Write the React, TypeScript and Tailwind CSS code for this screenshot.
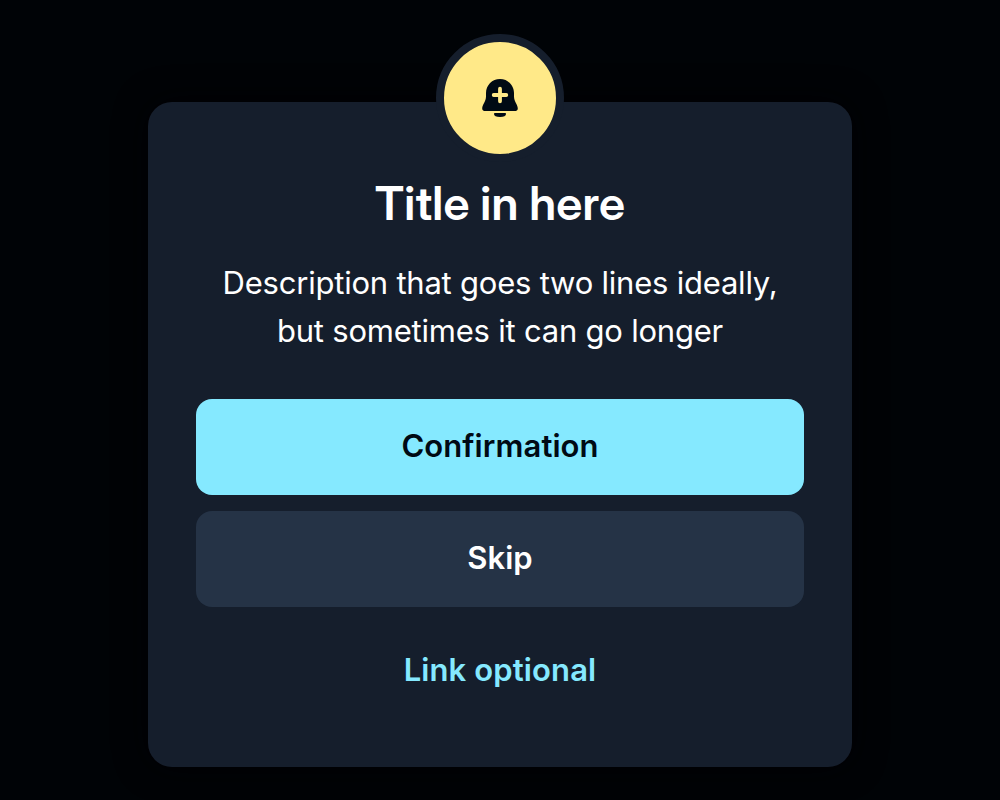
function BellPlusIcon() {
  return (
    <svg width="48" height="48" viewBox="0 0 48 48" fill="none" aria-hidden="true">
      <path
        d="M24 5C16.2 5 10 11.2 10 19V22.5C10 27.5 6.2 30.8 6.2 34.4C6.2 36.2 7.5 37 9.6 37H38.4C40.5 37 41.8 36.2 41.8 34.4C41.8 30.8 38 27.5 38 22.5V19C38 11.2 31.8 5 24 5Z"
        fill="#000A14"
      />
      <path d="M24 14.7V27.3M17.7 21H30.3" stroke="#FFE988" strokeWidth="3.8" strokeLinecap="round" />
      <path d="M19.2 39H28.8C29.6 39 30 39.4 30 40C30 41.8 27.8 43 24 43C20.2 43 18 41.8 18 40C18 39.4 18.4 39 19.2 39Z" fill="#000A14" />
    </svg>
  );
}

export default function App() {
  return (
    <main className="flex h-[800px] w-full justify-center overflow-hidden bg-[#000306] pt-[102px] font-['Inter',sans-serif]">
      <section className="flex h-[665px] w-[704px] flex-col items-center rounded-3xl bg-[#151E2C] px-12 shadow-[0_0_32px_#000204]">
        <div className="-mt-[68px] flex size-32 shrink-0 items-center justify-center rounded-full border-8 border-[#151E2C] bg-[#FFE988]">
          <BellPlusIcon />
        </div>
        <h1 className="mt-[13px] font-['Inter_Display','Inter',sans-serif] text-[47px] leading-[56px] font-semibold tracking-[0.15px] text-white">
          Title in here
        </h1>
        <p className="mt-7 text-center text-[31px] leading-[48px] font-normal tracking-[-0.22px] text-white">
          Description that goes two lines ideally,
          <br />
          but sometimes it can go longer
        </p>
        <div className="mt-11 flex w-full flex-col gap-4">
          <button className="h-24 rounded-2xl bg-[#85E9FF] pb-[3px] text-[31px] leading-[48px] font-semibold tracking-[0.08px] text-[#000A14]">
            Confirmation
          </button>
          <button className="h-24 rounded-2xl bg-[#253346] pb-[3px] text-[31px] leading-[48px] font-semibold text-white">
            Skip
          </button>
          <button className="h-24 pb-[3px] text-[31px] leading-[48px] font-semibold tracking-[0.12px] text-[#85E9FF]">
            Link optional
          </button>
        </div>
      </section>
    </main>
  );
}
